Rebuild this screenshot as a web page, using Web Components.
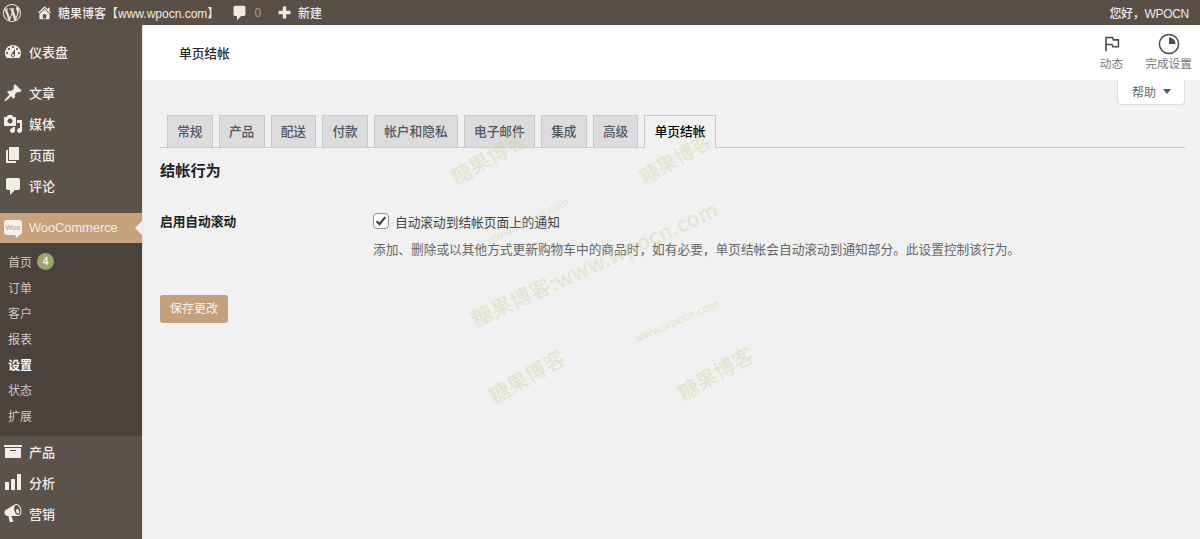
<!DOCTYPE html>
<html lang="zh-CN">
<head>
<meta charset="utf-8">
<title>单页结帐</title>
<style>
  html, body { margin: 0; height: 100%; overflow: hidden; }
  body { font-family: "Liberation Sans", "Noto Sans CJK SC", sans-serif; font-size: 12px; background: #f1f1f1; }
</style>
</head>
<body>
<wp-admin-shell>
  <wp-admin-bar slot="bar"></wp-admin-bar>
  <wp-sidebar slot="side">
    <wp-menu-item icon="dashboard" style="margin-bottom:10px">仪表盘</wp-menu-item>
    <wp-menu-item icon="pin">文章</wp-menu-item>
    <wp-menu-item icon="media">媒体</wp-menu-item>
    <wp-menu-item icon="page">页面</wp-menu-item>
    <wp-menu-item icon="comment" style="margin-bottom:12px">评论</wp-menu-item>
    <wp-menu-item icon="woo" current>WooCommerce</wp-menu-item>
    <wp-submenu>
      <wp-sub-item badge="4">首页</wp-sub-item>
      <wp-sub-item>订单</wp-sub-item>
      <wp-sub-item>客户</wp-sub-item>
      <wp-sub-item>报表</wp-sub-item>
      <wp-sub-item active>设置</wp-sub-item>
      <wp-sub-item>状态</wp-sub-item>
      <wp-sub-item>扩展</wp-sub-item>
    </wp-submenu>
    <wp-menu-item icon="archive">产品</wp-menu-item>
    <wp-menu-item icon="chart">分析</wp-menu-item>
    <wp-menu-item icon="megaphone">营销</wp-menu-item>
  </wp-sidebar>
  <wc-header title="单页结帐"></wc-header>
  <wc-help-row></wc-help-row>
  <wc-tabs></wc-tabs>
  <wc-settings></wc-settings>
  <wc-watermarks></wc-watermarks>
</wp-admin-shell>

<script>
const FONT = '"Liberation Sans", "Noto Sans CJK SC", sans-serif';

const ICONS = {
  wordpress: 'M20 10c0-5.51-4.49-10-10-10C4.48 0 0 4.49 0 10c0 5.52 4.48 10 10 10 5.51 0 10-4.48 10-10zM7.78 15.37L4.37 6.22c.55-.02 1.17-.08 1.17-.08.5-.06.44-1.13-.06-1.11 0 0-1.45.11-2.37.11-.18 0-.37 0-.58-.01C4.12 2.69 6.87 1.11 10 1.11c2.33 0 4.45.87 6.05 2.34-.68-.11-1.65.39-1.65 1.58 0 .74.45 1.36.9 2.1.35.61.55 1.36.55 2.46 0 1.49-1.4 5-1.4 5l-3.03-8.37c.54-.02.82-.17.82-.17.5-.05.44-1.25-.06-1.22 0 0-1.44.12-2.38.12-.87 0-2.33-.12-2.33-.12-.5-.03-.56 1.2-.06 1.22l.92.08 1.26 3.41zM17.41 10c.24-.64.74-1.87.43-4.25.7 1.29 1.05 2.71 1.05 4.25 0 3.29-1.73 6.24-4.4 7.78.97-2.59 1.94-5.2 2.92-7.78zM6.1 18.09C3.12 16.65 1.11 13.53 1.11 10c0-1.3.23-2.48.72-3.59C3.25 10.3 4.67 14.2 6.1 18.09zm4.03-6.63l2.58 6.98c-.86.29-1.76.45-2.71.45-.79 0-1.57-.11-2.29-.33.81-2.38 1.62-4.74 2.42-7.1z',
  home: 'M16 8.5l1.53 1.53-1.06 1.06L10 4.62l-6.47 6.47-1.06-1.06L10 2.5l4 4v-2h2v4zm-6-2.46l6 5.99V18H4v-5.97zM12 17v-5H8v5h4z',
  comment: 'M5 2h10c1.1 0 2 .9 2 2v8c0 1.1-.9 2-2 2h-3l-5 5v-5H5c-1.1 0-2-.9-2-2V4c0-1.1.9-2 2-2z',
  plus: 'M17 8v4h-5v5H8v-5H3V8h5V3h4v5h5z',
  dashboard: 'M3.76 16h12.48c1.1-1.37 1.76-3.11 1.76-5 0-4.42-3.58-8-8-8s-8 3.58-8 8c0 1.89.66 3.63 1.76 5zM10 4c.55 0 1 .45 1 1s-.45 1-1 1-1-.45-1-1 .45-1 1-1zM6 6c.55 0 1 .45 1 1s-.45 1-1 1-1-.45-1-1 .45-1 1-1zm8 0c.55 0 1 .45 1 1s-.45 1-1 1-1-.45-1-1 .45-1 1-1zm-5.37 5.55L12 7v6c0 1.1-.9 2-2 2s-2-.9-2-2c0-.57.24-1.08.63-1.45zM4 10c.55 0 1 .45 1 1s-.45 1-1 1-1-.45-1-1 .45-1 1-1zm12 0c.55 0 1 .45 1 1s-.45 1-1 1-1-.45-1-1 .45-1 1-1zm-5 3c0-.55-.45-1-1-1s-1 .45-1 1 .45 1 1 1 1-.45 1-1z',
  pin: 'M10.44 3.02l1.82-1.82 6.36 6.35-1.83 1.82c-1.05-.68-2.48-.57-3.41.36l-.75.75c-.92.93-1.04 2.35-.35 3.41l-1.83 1.82-2.41-2.41-2.8 2.79c-.42.42-3.38 2.71-3.8 2.29s1.86-3.39 2.28-3.81l2.79-2.79L4.1 9.36l1.83-1.82c1.05.69 2.48.57 3.4-.36l.75-.75c.93-.92 1.05-2.35.36-3.41z',
  media: 'M13 11V4c0-.55-.45-1-1-1h-1.67L9 1H5L3.67 3H2c-.55 0-1 .45-1 1v7c0 .55.45 1 1 1h10c.55 0 1-.45 1-1zM7 4.5c1.38 0 2.5 1.12 2.5 2.5S8.38 9.5 7 9.5 4.5 8.38 4.5 7 5.62 4.5 7 4.5zM14 6h5v10.5c0 1.38-1.12 2.5-2.5 2.5S14 17.88 14 16.5s1.12-2.5 2.5-2.5c.17 0 .34.02.5.05V9h-3V6zm-4 8.05V13h2v3.5c0 1.38-1.12 2.5-2.5 2.5S7 17.88 7 16.5 8.12 14 9.5 14c.17 0 .34.02.5.05z',
  page: 'M6 15V2h10v13H6zm-1 1h8v2H3V5h2v11z',
  archive: 'M19 4v2H1V4h18zM2 7h16v10H2V7zm11 3V9H7v1h6z',
  chart: 'M18 18V2h-4v16h4zm-6 0V7H8v11h4zm-6 0v-8H2v8h4z',
  megaphone: 'M18.15 5.94c.46 1.62.38 3.22-.02 4.48-.42 1.28-1.26 2.18-2.3 2.48-.16.06-.26.06-.4.06-.06.02-.12.02-.18.02-.06.02-.14.02-.22.02h-6.8l2.22 5.5c.02.14-.06.26-.14.34-.08.1-.24.16-.34.16H6.95c-.1 0-.26-.06-.34-.16-.08-.08-.16-.2-.14-.34l-1-5.5H4.25l-.02-.02c-.5.06-1.08-.18-1.54-.62s-.88-1.08-1.06-1.88c-.24-.8-.2-1.56-.02-2.2.18-.62.58-1.08 1.06-1.3l.02-.02 9-5.4c.1-.06.18-.1.24-.16.06-.04.14-.08.24-.12.16-.08.28-.12.5-.18 1.04-.3 2.24.1 3.22.98s1.84 2.24 2.26 3.86zm-2.58 5.98h-.02c.4-.1.74-.34 1.04-.7.58-.7.86-1.76.86-3.04-.02-.64-.1-1.3-.28-1.98-.34-1.36-1.02-2.5-1.78-3.24s-1.68-1.1-2.46-.88c-.38.12-.72.34-.98.7-.58.68-.86 1.76-.86 3.04.02.64.1 1.3.28 1.98.34 1.34 1.02 2.48 1.78 3.24.78.74 1.62 1.1 2.42.88zm-.38-1.4c-.38.1-.78-.02-1.16-.36-.36-.34-.66-.88-.82-1.52-.18-.66-.18-1.28-.02-1.76.16-.48.44-.78.82-.88s.78.02 1.16.36c.36.34.66.88.82 1.52.18.66.18 1.28.02 1.76-.16.48-.44.78-.82.88z'
};

function svgIcon(name, size) {
  return `<svg width="${size}" height="${size}" viewBox="0 0 20 20" fill="currentColor" aria-hidden="true"><path fill-rule="evenodd" d="${ICONS[name]}"/></svg>`;
}

// small helper so every element below only declares its shadow markup
class ShadowEl extends HTMLElement {
  constructor() {
    super();
    this.attachShadow({ mode: 'open' });
  }
  connectedCallback() {
    this.shadowRoot.innerHTML = this.markup();
  }
}

class AdminShell extends ShadowEl {
  markup() {
    return `
      <style>
        :host { display: flex; flex-direction: column; width: 1200px; height: 539px; overflow: hidden; position: relative; }
        .row { display: flex; flex: 1; min-height: 0; }
        .main { flex: 1; min-width: 0; background: #f1f1f1; display: flex; flex-direction: column; border-left: 1px solid #e6e6e6; }
      </style>
      <slot name="bar"></slot>
      <div class="row">
        <slot name="side"></slot>
        <div class="main"><slot></slot></div>
      </div>`;
  }
}

class AdminBar extends ShadowEl {
  markup() {
    return `
      <style>
        :host { display: flex; align-items: center; height: 25px; flex: none; background: #5a4f47; color: #efece8; font-size: 12px; font-family: ${FONT}; font-weight: 500; padding: 0 11px 0 3px; }
        .i { display: flex; align-items: center; }
        svg { display: block; }
        .logo { margin-right: 15px; color: #e6e3df; }
        .home { margin-right: 5px; }
        .site { margin-right: 12px; }
        .cnt { color: #a69d95; margin: 0 15px 0 6px; }
        .plus { margin-right: 5px; }
        .sp { flex: 1; }
        .hi { letter-spacing: -.3px; }
      </style>
      <span class="i logo">${svgIcon('wordpress', 18)}</span>
      <span class="i home">${svgIcon('home', 17)}</span>
      <span class="site">糖果博客【www.wpocn.com】</span>
      <span class="i">${svgIcon('comment', 17)}</span>
      <span class="cnt">0</span>
      <span class="i plus">${svgIcon('plus', 17)}</span>
      <span>新建</span>
      <span class="sp"></span>
      <span class="hi">您好，WPOCN</span>`;
  }
}

class Sidebar extends ShadowEl {
  markup() {
    return `
      <style>
        :host { display: flex; flex-direction: column; width: 142px; flex: none; background: #5b5249; padding-top: 11px; box-sizing: border-box; font-family: ${FONT}; }
      </style>
      <slot></slot>`;
  }
}

class MenuItem extends ShadowEl {
  markup() {
    const current = this.hasAttribute('current');
    const name = this.getAttribute('icon');
    const icon = name === 'woo'
      ? `<span class="woo">Woo</span>`
      : svgIcon(name, 20);
    return `
      <style>
        :host { display: flex; align-items: center; height: ${current ? 30 : 31}px; flex: none; position: relative; color: #f1eeea; font-size: 13px; font-weight: 500; background: ${current ? '#c6a27f' : 'transparent'}; }
        .ic { width: 29px; display: flex; justify-content: center; padding-left: 1px; box-sizing: border-box; flex: none; margin-left: -2px; }
        svg { display: block; }
        .woo { display: block; position: relative; width: 18px; height: 15px; margin-bottom: 2px; background: #f4f1ee; border-radius: 3px; color: #b49477; font: 400 7px/15px "Liberation Sans", sans-serif; text-align: center; }
        .woo::after { content: ""; position: absolute; left: 11px; bottom: -3px; border: 2px solid transparent; border-top: 3px solid #f4f1ee; border-bottom: 0; }
        :host([current]) { font-weight: 400; font-size: 12.8px; }
        :host([current]) .lb { margin-bottom: 1px; }
        :host([current])::after { content: ""; position: absolute; right: 0; top: 8px; border: 7px solid transparent; border-right-color: #f1f1f1; border-left-width: 0; }
        .lb { margin-left: 2px; }
      </style>
      <span class="ic">${icon}</span><span class="lb"><slot></slot></span>`;
  }
}

class Submenu extends ShadowEl {
  markup() {
    return `
      <style>
        :host { display: flex; flex-direction: column; flex: none; background: #4a423b; padding: 6px 0 7.5px; }
      </style>
      <slot></slot>`;
  }
}

class SubItem extends ShadowEl {
  markup() {
    const badge = this.getAttribute('badge');
    return `
      <style>
        :host { display: flex; align-items: center; height: 25.6px; padding-left: 8px; color: #cfc9c3; font-size: 12px; flex: none; }
        :host([active]) { color: #fff; font-weight: 700; }
        .b { width: 17px; height: 17px; border-radius: 50%; background: #9ba66f; color: #f3f3ea; font-size: 10px; font-weight: 700; display: flex; align-items: center; justify-content: center; margin-left: 5px; }
      </style>
      <slot></slot>${badge ? `<span class="b">${badge}</span>` : ''}`;
  }
}

class WcHeader extends ShadowEl {
  markup() {
    return `
      <style>
        :host { display: flex; align-items: center; height: 55px; flex: none; background: #fff; padding: 0 8px 0 36px; font-family: ${FONT}; color: #23282d; }
        .t { flex: 1; font-size: 12.7px; font-weight: 500; margin-top: -1px; }
        .act { display: flex; flex-direction: column; align-items: center; color: #757575; font-size: 11.7px; line-height: 14px; margin-top: -2px; }
        .act + .act { margin-left: 22px; }
        svg { display: block; margin-bottom: 2px; }
      </style>
      <div class="t">${this.getAttribute('title')}</div>
      <div class="act">
        <svg width="22" height="22" viewBox="0 0 24 24" fill="none" stroke="#4a4a4a" stroke-width="1.7"><path d="M5.5 20V5h7l1 2.5h5.500v7.500h-6l-1-2.500H5.500"/></svg>
        动态
      </div>
      <div class="act">
        <svg width="22" height="22" viewBox="0 0 22 22"><circle cx="11" cy="11" r="9.6" fill="none" stroke="#4a4a4a" stroke-width="1.5"/><path d="M11 4.400a6.600 6.600 0 0 1 6.600 6.600H11z" fill="#4a4a4a"/></svg>
        完成设置
      </div>`;
  }
}

class HelpRow extends ShadowEl {
  markup() {
    return `
      <style>
        :host { display: flex; justify-content: flex-end; height: 35px; flex: none; padding-right: 15px; font-family: ${FONT}; box-sizing: border-box; }
        .h { display: flex; align-items: center; gap: 7px; height: 25px; width: 68px; box-sizing: border-box; padding: 0 0 1px 14px; background: #fff; border: 1px solid #dcdcde; border-top: 0; border-radius: 0 0 4px 4px; color: #646970; font-size: 12px; }
        .a { width: 0; height: 0; border: 4px solid transparent; border-top: 5px solid #50575e; border-bottom: 0; }
      </style>
      <div class="h">帮助<span class="a"></span></div>`;
  }
}

class WcTabs extends ShadowEl {
  markup() {
    const names = ['常规', '产品', '配送', '付款', '帐户和隐私', '电子邮件', '集成', '高级', '单页结帐'];
    const tabs = names.map((n, i) =>
      `<span class="tab${i === names.length - 1 ? ' on' : ''}">${n}</span>`).join('');
    return `
      <style>
        :host { display: flex; height: 33px; flex: none; margin: 0 15px 0 17px; padding-left: 7px; gap: 6px; border-bottom: 1px solid #c9c9c9; box-sizing: border-box; font-family: ${FONT}; }
        .tab { display: flex; align-items: center; height: 32px; box-sizing: border-box; padding: 0 9.2px 2px; background: #dcdcde; border: 1px solid #c9c9c9; border-bottom: 0; color: #50575e; font-size: 12.7px; font-weight: 500; }
        .on { background: #f1f1f1; color: #000; height: 33px; margin-bottom: -1px; padding-bottom: 3px; }
      </style>
      ${tabs}`;
  }
}

class WcSettings extends ShadowEl {
  markup() {
    return `
      <style>
        :host { display: block; padding: 13px 0 0 17px; font-family: ${FONT}; color: #3c434a; font-size: 12.7px; }
        h2 { font-size: 15.2px; line-height: 20px; margin: 0 0 32px; font-weight: 700; color: #1d2327; }
        .row { display: flex; }
        .lab { width: 213px; flex: none; font-weight: 700; color: #1d2327; line-height: 18px; }
        .cb { display: flex; align-items: center; gap: 6px; height: 18px; color: #3c434a; margin-top: -1px; }
        .box { width: 14px; height: 14px; border: 1px solid #8c8f94; border-radius: 4px; background: #fff; display: flex; align-items: center; justify-content: center; }
        svg { display: block; }
        .desc { color: #666; margin-top: 11px; line-height: 18px; }
        .btn { display: inline-block; margin-top: 36px; width: 68px; height: 28px; line-height: 28px; text-align: center; background: #c4a07f; border-radius: 3px; color: #f7f3ee; font-size: 12px; }
      </style>
      <h2>结帐行为</h2>
      <div class="row">
        <div class="lab">启用自动滚动</div>
        <div>
          <div class="cb">
            <span class="box"><svg width="14" height="14" viewBox="0 0 14 14" fill="none" stroke="#3a3a3a" stroke-width="2"><path d="M2.6 7.2l3 3 5.6-7"/></svg></span>
            自动滚动到结帐页面上的通知
          </div>
          <div class="desc">添加、删除或以其他方式更新购物车中的商品时，如有必要，单页结帐会自动滚动到通知部分。此设置控制该行为。</div>
        </div>
      </div>
      <span class="btn">保存更改</span>`;
  }
}

// faint diagonal watermark stamped over the screenshot
class Watermarks extends ShadowEl {
  markup() {
    const marks = [
      [488, 157, 21, '糖果博客', -30, 0],
      [675, 158, 20, '糖果博客', -30, 0],
      [527, 220, 11, 'www.wpocn.com', -26.5, 0],
      [594, 263, 21, '糖果博客:www.wpocn.com', -24.6, .3],
      [676, 320, 11, 'www.wpocn.com', -23.5, 0],
      [526, 376, 21, '糖果博客', -30, 0],
      [715, 373, 21, '糖果博客', -30, 0]
    ];
    const spans = marks.map(([x, y, size, text, deg, ls]) =>
      `<span style="left:${x}px;top:${y}px;font-size:${size}px;letter-spacing:${ls}px;transform:translate(-50%,-50%) rotate(${deg}deg)">${text}</span>`).join('');
    return `
      <style>
        :host { display: block; position: absolute; inset: 0; pointer-events: none; font-family: "Noto Sans CJK SC", "Liberation Sans", sans-serif; }
        span { position: absolute; white-space: nowrap; color: rgba(205, 214, 160, .42); font-weight: 500; }
      </style>
      ${spans}`;
  }
}

customElements.define('wp-admin-shell', AdminShell);
customElements.define('wp-admin-bar', AdminBar);
customElements.define('wp-sidebar', Sidebar);
customElements.define('wp-menu-item', MenuItem);
customElements.define('wp-submenu', Submenu);
customElements.define('wp-sub-item', SubItem);
customElements.define('wc-header', WcHeader);
customElements.define('wc-help-row', HelpRow);
customElements.define('wc-tabs', WcTabs);
customElements.define('wc-settings', WcSettings);
customElements.define('wc-watermarks', Watermarks);
</script>
</body>
</html>
